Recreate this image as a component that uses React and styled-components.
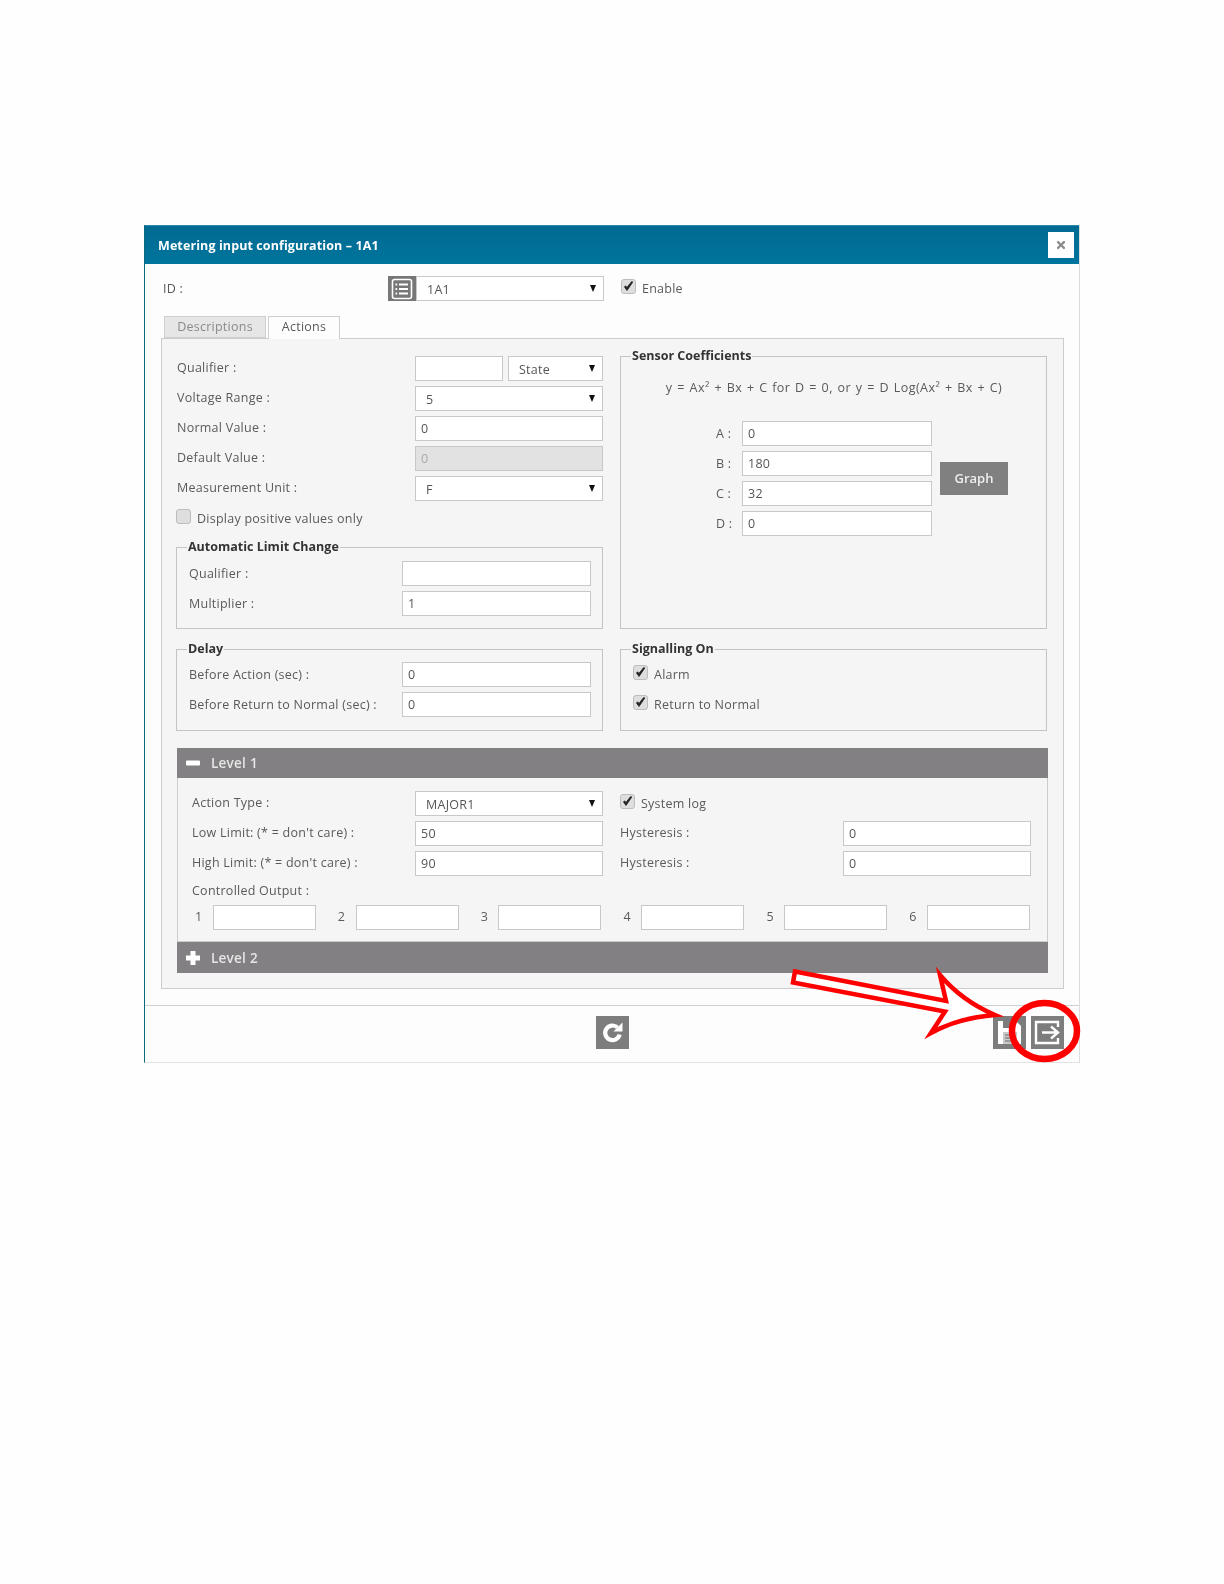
import React from 'react';
import styled, { createGlobalStyle } from 'styled-components';
import { FaTimes } from 'react-icons/fa';

const GlobalStyle = createGlobalStyle`
  html, body {
    margin: 0;
    background: #fefefe;
  }
  body {
    font-family: "Open Sans", "Liberation Sans", sans-serif;
    font-size: 12.5px;
    letter-spacing: 0.25px;
    color: #5a5a5a;
  }
  * { box-sizing: border-box; }
`;

const Page = styled.div`
  width: 1224px;
  height: 1584px;
  padding: 225px 0 0 144px;
`;

const Dialog = styled.div`
  position: relative;
  width: 936px;
  height: 838px;
  background: #fdfdfd;
  border-left: 1px solid #0a6a80;
  border-right: 1px solid #dcdcdc;
  border-bottom: 1px solid #e2e2e2;
  filter: blur(0.3px);
`;

const Header = styled.div`
  height: 39px;
  display: flex;
  align-items: center;
  justify-content: space-between;
  padding: 0 5px 0 13px;
  background: linear-gradient(#006a92, #00759d);
  border-top: 1px solid #2b8aa8;
  color: #fff;
  font-weight: 700;
  font-size: 12.5px;
  letter-spacing: 0.1px;
`;

const CloseButton = styled.div`
  width: 26px;
  height: 26px;
  display: flex;
  align-items: center;
  justify-content: center;
  background: #fff;
  color: #8a8a8a;
  font-size: 12px;
`;

const IdRow = styled.div`
  display: flex;
  align-items: center;
  height: 25px;
  margin: 12px 0 15px 18px;
`;

const IdLabel = styled.div`
  width: 225px;
  padding-bottom: 1px;
`;

const ListButton = styled.div`
  width: 28px;
  height: 25px;
  display: flex;
  align-items: center;
  justify-content: center;
  background: #777;
`;

const IdSelectWrap = styled.div`
  width: 188px;
  margin-right: 17px;
`;

const Tabs = styled.div`
  display: flex;
  gap: 2px;
  padding-left: 19px;
  height: 22px;
`;

const Tab = styled.div`
  width: ${p => p.$width}px;
  height: ${p => (p.$active ? '23px' : '22px')};
  text-align: center;
  line-height: 20px;
  border: 1px solid #cfcfcf;
  border-bottom: ${p => (p.$active ? 'none' : '1px solid #cfcfcf')};
  background: ${p => (p.$active ? '#fdfdfd' : '#e6e6e6')};
  color: ${p => (p.$active ? '#5a5a5a' : '#8a8a8a')};
  position: relative;
  z-index: 1;
`;

const Panel = styled.div`
  width: 903px;
  height: 651px;
  margin-left: 16px;
  padding: 9px 14px 0;
  background: #f5f5f5;
  border: 1px solid #cccccc;
`;

const Columns = styled.div`
  display: grid;
  grid-template-columns: 427px 427px;
  column-gap: 17px;
`;

const LeftColumn = styled.div`
  display: flex;
  flex-direction: column;
`;

const Rows = styled.div`
  display: flex;
  flex-direction: column;
  gap: 5px;
  padding-top: 8px;
`;

const Row = styled.div`
  display: flex;
  align-items: center;
  height: 25px;
`;

const RowLabel = styled.div`
  width: ${p => (p.$width ? `${p.$width}px` : 'auto')};
  flex-shrink: 0;
  padding-left: ${p => p.$indent || 0}px;
  padding-bottom: ${p => p.$lift || 1}px;
`;

const TextInput = styled.input`
  display: block;
  width: ${p => (p.$width ? `${p.$width}px` : '100%')};
  height: 25px;
  margin: 0;
  padding: 0 5px;
  font: inherit;
  letter-spacing: inherit;
  color: #555;
  background: ${p => (p.disabled ? '#e2e2e2' : '#fff')};
  border: 1px solid #c8c8c8;
  border-radius: 0;
  outline: none;
  &:disabled {
    color: #aaa;
  }
`;

const SelectBox = styled.div`
  position: relative;
  flex-shrink: 0;
  width: ${p => (p.$width ? `${p.$width}px` : '100%')};
  margin-left: ${p => p.$gap || 0}px;
  height: 25px;
  padding: 1px 0 0 10px;
  line-height: 23px;
  background: #fff;
  border: 1px solid #c8c8c8;
  color: #555;
  &::after {
    content: '';
    position: absolute;
    top: 8px;
    right: 7px;
    border-left: 3.5px solid transparent;
    border-right: 3.5px solid transparent;
    border-top: 7px solid #111;
  }
`;

const CheckRow = styled.label`
  display: flex;
  align-items: center;
  gap: 6px;
  height: 25px;
  padding-bottom: 1px;
`;

const CheckBox = styled.span`
  width: 15px;
  height: 15px;
  flex-shrink: 0;
  display: flex;
  align-items: center;
  justify-content: center;
  margin-top: -3px;
  background: #dedede;
  border: 1px solid #bdbdbd;
  border-radius: 3px;
`;

const Fieldset = styled.fieldset`
  margin: ${p => p.$top || 0}px 0 0;
  padding: ${p => p.$padTop || 5}px 11px 0 12px;
  min-width: 0;
  height: ${p => p.$height}px;
  border: 1px solid #c4c4c4;
`;

const Legend = styled.legend`
  height: 17px;
  line-height: 16px;
  padding: 0 1px;
  margin-left: -2px;
  font-weight: 700;
  font-size: 12.5px;
  letter-spacing: 0;
  color: #333;
`;

const FieldRows = styled.div`
  display: flex;
  flex-direction: column;
  gap: 5px;
`;

const Formula = styled.div`
  text-align: center;
  height: 51px;
  padding-top: 9px;
  line-height: 18px;
  letter-spacing: 0.45px;
  word-spacing: 1px;
`;

const Coefficients = styled.div`
  display: flex;
  align-items: center;
  padding-left: 81px;
`;

const GraphButton = styled.div`
  width: 68px;
  height: 33px;
  margin-left: 8px;
  padding-bottom: 2px;
  display: flex;
  align-items: center;
  justify-content: center;
  background: #808080;
  color: #eee;
  font-size: 13px;
  font-weight: 600;
  letter-spacing: 0;
`;

const Signals = styled.div`
  display: flex;
  flex-direction: column;
  gap: 5px;
`;

const LevelBar = styled.div`
  display: flex;
  align-items: center;
  gap: 11px;
  width: 871px;
  height: ${p => p.$height}px;
  margin-left: 1px;
  margin-top: ${p => p.$top || 0}px;
  padding-left: 9px;
  background: #828082;
  color: #e6e6e6;
  font-size: 13.5px;
  font-weight: 600;
`;

const LevelBody = styled.div`
  width: 871px;
  height: 164px;
  margin-left: 1px;
  padding: 13px 0 0 14px;
  border: 1px solid #cccccc;
  border-top: none;
`;

const LevelGrid = styled.div`
  display: grid;
  grid-template-columns: 206px 188px 206px 188px;
  grid-auto-rows: 25px;
  column-gap: 17px;
  row-gap: 5px;
  align-items: center;
`;

const OutputTitle = styled.div`
  height: 29px;
  padding-top: 5px;
  line-height: 20px;
`;

const Outputs = styled.div`
  display: grid;
  grid-template-columns: repeat(6, 1fr);
  column-gap: 19.1px;
  width: 838px;
`;

const OutputCell = styled.div`
  display: grid;
  grid-template-columns: 20.7px 1fr;
  align-items: center;
`;

const OutputNumber = styled.div`
  padding: 0 0 2px 3px;
`;

const Footer = styled.div`
  display: grid;
  grid-template-columns: 1fr auto 1fr;
  height: 56px;
  margin-top: 16px;
  padding: 10px 15px 0;
  border-top: 1px solid #cfcfcf;
`;

const FooterCenter = styled.div`
  grid-column: 2;
`;

const FooterRight = styled.div`
  grid-column: 3;
  display: flex;
  justify-content: flex-end;
  gap: 5px;
`;

const IconButton = styled.div`
  width: 33px;
  height: 33px;
  display: flex;
  align-items: center;
  justify-content: center;
  background: #7d7d7d;
`;

const Annotation = styled.svg`
  position: absolute;
  left: -1px;
  top: 0;
  pointer-events: none;
`;

const Check = ({ checked }) => (
  <CheckBox>
    {checked && (
      <svg width="11" height="11" viewBox="0 0 11 11">
        <path d="M1.5 6 L4 9.5 L9.8 1 L8.6 0.6 L4 6.4 L2.6 4.8 Z" fill="#222" stroke="#222" strokeWidth="0.8" />
      </svg>
    )}
  </CheckBox>
);

const ListIcon = () => (
  <svg width="22" height="22" viewBox="0 0 22 22" fill="none" stroke="#fff">
    <rect x="1.5" y="1.5" width="19" height="19" rx="2" strokeWidth="1.6" />
    <path d="M8 6.5H17M8 11H17M8 15.5H17" strokeWidth="1.8" />
    <path d="M4.5 6.5H6.2M4.5 11H6.2M4.5 15.5H6.2" strokeWidth="1.8" />
  </svg>
);

const MinusIcon = () => (
  <svg width="14" height="14" viewBox="0 0 14 14">
    <rect x="0" y="4.5" width="14" height="5" rx="1" fill="#fff" />
  </svg>
);

const PlusIcon = () => (
  <svg width="14" height="14" viewBox="0 0 14 14">
    <path d="M4.5 0H9.5V4.5H14V9.5H9.5V14H4.5V9.5H0V4.5H4.5Z" fill="#fff" />
  </svg>
);

const RefreshIcon = () => (
  <svg width="25" height="25" viewBox="0 0 25 25" fill="none">
    <path d="M17.5 7.5A7.3 7.3 0 1 0 19.6 14.5" stroke="#fff" strokeWidth="4.2" />
    <path d="M22.5 2.5V11.5H13.5Z" fill="#fff" />
  </svg>
);

const SaveIcon = () => (
  <svg width="25" height="25" viewBox="0 0 25 25">
    <path d="M1 1H19L24 6V24H1Z" fill="#fff" />
    <rect x="6" y="1" width="11" height="7" fill="#7d7d7d" />
    <rect x="6" y="12" width="14" height="12" fill="#c9c9c9" />
    <path d="M8 15H18M8 18H18M8 21H18" stroke="#8a8a8a" strokeWidth="1.4" />
  </svg>
);

const ExitIcon = () => (
  <svg width="27" height="25" viewBox="0 0 27 25" fill="none" stroke="#fff" strokeWidth="2.4">
    <path d="M24 7V2H2V23H24V18" />
    <path d="M8 12.5H23M17 6.5L24 12.5L17 18.5" />
  </svg>
);

const App = () => (
  <Page>
    <GlobalStyle />
    <Dialog>
      <Header>
        <span>Metering input configuration – 1A1</span>
        <CloseButton><FaTimes /></CloseButton>
      </Header>

      <IdRow>
        <IdLabel>ID :</IdLabel>
        <ListButton><ListIcon /></ListButton>
        <IdSelectWrap><SelectBox>1A1</SelectBox></IdSelectWrap>
        <CheckRow><Check checked />Enable</CheckRow>
      </IdRow>

      <Tabs>
        <Tab $width={102}>Descriptions</Tab>
        <Tab $width={72} $active>Actions</Tab>
      </Tabs>

      <Panel>
        <Columns>
          <LeftColumn>
            <Rows>
              <Row>
                <RowLabel $width={239} $indent={1} $lift={2}>Qualifier :</RowLabel>
                <TextInput $width={88} readOnly value="" />
                <SelectBox $width={95} $gap={5}>State</SelectBox>
              </Row>
              <Row>
                <RowLabel $width={239} $indent={1} $lift={2}>Voltage Range :</RowLabel>
                <SelectBox $width={188}>5</SelectBox>
              </Row>
              <Row>
                <RowLabel $width={239} $indent={1} $lift={2}>Normal Value :</RowLabel>
                <TextInput $width={188} readOnly value="0" />
              </Row>
              <Row>
                <RowLabel $width={239} $indent={1} $lift={2}>Default Value :</RowLabel>
                <TextInput $width={188} disabled value="0" />
              </Row>
              <Row>
                <RowLabel $width={239} $indent={1} $lift={2}>Measurement Unit :</RowLabel>
                <SelectBox $width={188}>F</SelectBox>
              </Row>
              <CheckRow><Check />Display positive values only</CheckRow>
            </Rows>

            <Fieldset $top={8} $padTop={5} $height={90}>
              <Legend>Automatic Limit Change</Legend>
              <FieldRows>
                <Row>
                  <RowLabel $width={213}>Qualifier :</RowLabel>
                  <TextInput $width={189} readOnly value="" />
                </Row>
                <Row>
                  <RowLabel $width={213}>Multiplier :</RowLabel>
                  <TextInput $width={189} readOnly value="1" />
                </Row>
              </FieldRows>
            </Fieldset>
          </LeftColumn>

          <Fieldset $height={281}>
            <Legend>Sensor Coefficients</Legend>
            <Formula>y = Ax² + Bx + C for D = 0, or y = D Log(Ax² + Bx + C)</Formula>
            <Coefficients>
              <FieldRows>
                <Row><RowLabel $width={28} $indent={2}>A :</RowLabel><TextInput $width={190} readOnly value="0" /></Row>
                <Row><RowLabel $width={28} $indent={2}>B :</RowLabel><TextInput $width={190} readOnly value="180" /></Row>
                <Row><RowLabel $width={28} $indent={2}>C :</RowLabel><TextInput $width={190} readOnly value="32" /></Row>
                <Row><RowLabel $width={28} $indent={2}>D :</RowLabel><TextInput $width={190} readOnly value="0" /></Row>
              </FieldRows>
              <GraphButton>Graph</GraphButton>
            </Coefficients>
          </Fieldset>
        </Columns>

        <Columns>
          <Fieldset $top={12} $padTop={4} $height={90}>
            <Legend>Delay</Legend>
            <FieldRows>
              <Row>
                <RowLabel $width={213}>Before Action (sec) :</RowLabel>
                <TextInput $width={189} readOnly value="0" />
              </Row>
              <Row>
                <RowLabel $width={213}>Before Return to Normal (sec) :</RowLabel>
                <TextInput $width={189} readOnly value="0" />
              </Row>
            </FieldRows>
          </Fieldset>
          <Fieldset $top={12} $padTop={4} $height={90}>
            <Legend>Signalling On</Legend>
            <Signals>
              <CheckRow><Check checked />Alarm</CheckRow>
              <CheckRow><Check checked />Return to Normal</CheckRow>
            </Signals>
          </Fieldset>
        </Columns>

        <LevelBar $height={30} $top={17}>
          <MinusIcon />
          <span>Level 1</span>
        </LevelBar>
        <LevelBody>
          <LevelGrid>
            <RowLabel $lift={2}>Action Type :</RowLabel>
            <SelectBox>MAJOR1</SelectBox>
            <CheckRow><Check checked />System log</CheckRow>
            <div />
            <RowLabel $lift={2}>Low Limit: (* = don't care) :</RowLabel>
            <TextInput readOnly value="50" />
            <RowLabel $lift={2}>Hysteresis :</RowLabel>
            <TextInput readOnly value="0" />
            <RowLabel $lift={2}>High Limit: (* = don't care) :</RowLabel>
            <TextInput readOnly value="90" />
            <RowLabel $lift={2}>Hysteresis :</RowLabel>
            <TextInput readOnly value="0" />
          </LevelGrid>
          <OutputTitle>Controlled Output :</OutputTitle>
          <Outputs>
            {[1, 2, 3, 4, 5, 6].map(n => (
              <OutputCell key={n}>
                <OutputNumber>{n}</OutputNumber>
                <TextInput readOnly value="" />
              </OutputCell>
            ))}
          </Outputs>
        </LevelBody>
        <LevelBar $height={31}>
          <PlusIcon />
          <span>Level 2</span>
        </LevelBar>
      </Panel>

      <Footer>
        <FooterCenter>
          <IconButton><RefreshIcon /></IconButton>
        </FooterCenter>
        <FooterRight>
          <IconButton><SaveIcon /></IconButton>
          <IconButton><ExitIcon /></IconButton>
        </FooterRight>
      </Footer>

      <Annotation width="960" height="860" viewBox="144 225 960 860">
        <path
          d="M795 971.5 L946 1001 L940 975 Q962 1001 995 1015 Q958 1018 931 1033 L945 1011.5 L793 982.5 Z"
          fill="#fff"
          stroke="#f00"
          strokeWidth="4.5"
          strokeMiterlimit="10"
        />
        <ellipse cx="1044.5" cy="1031" rx="32.5" ry="28" fill="none" stroke="#f00" strokeWidth="6.5" />
      </Annotation>
    </Dialog>
  </Page>
);

export default App;
